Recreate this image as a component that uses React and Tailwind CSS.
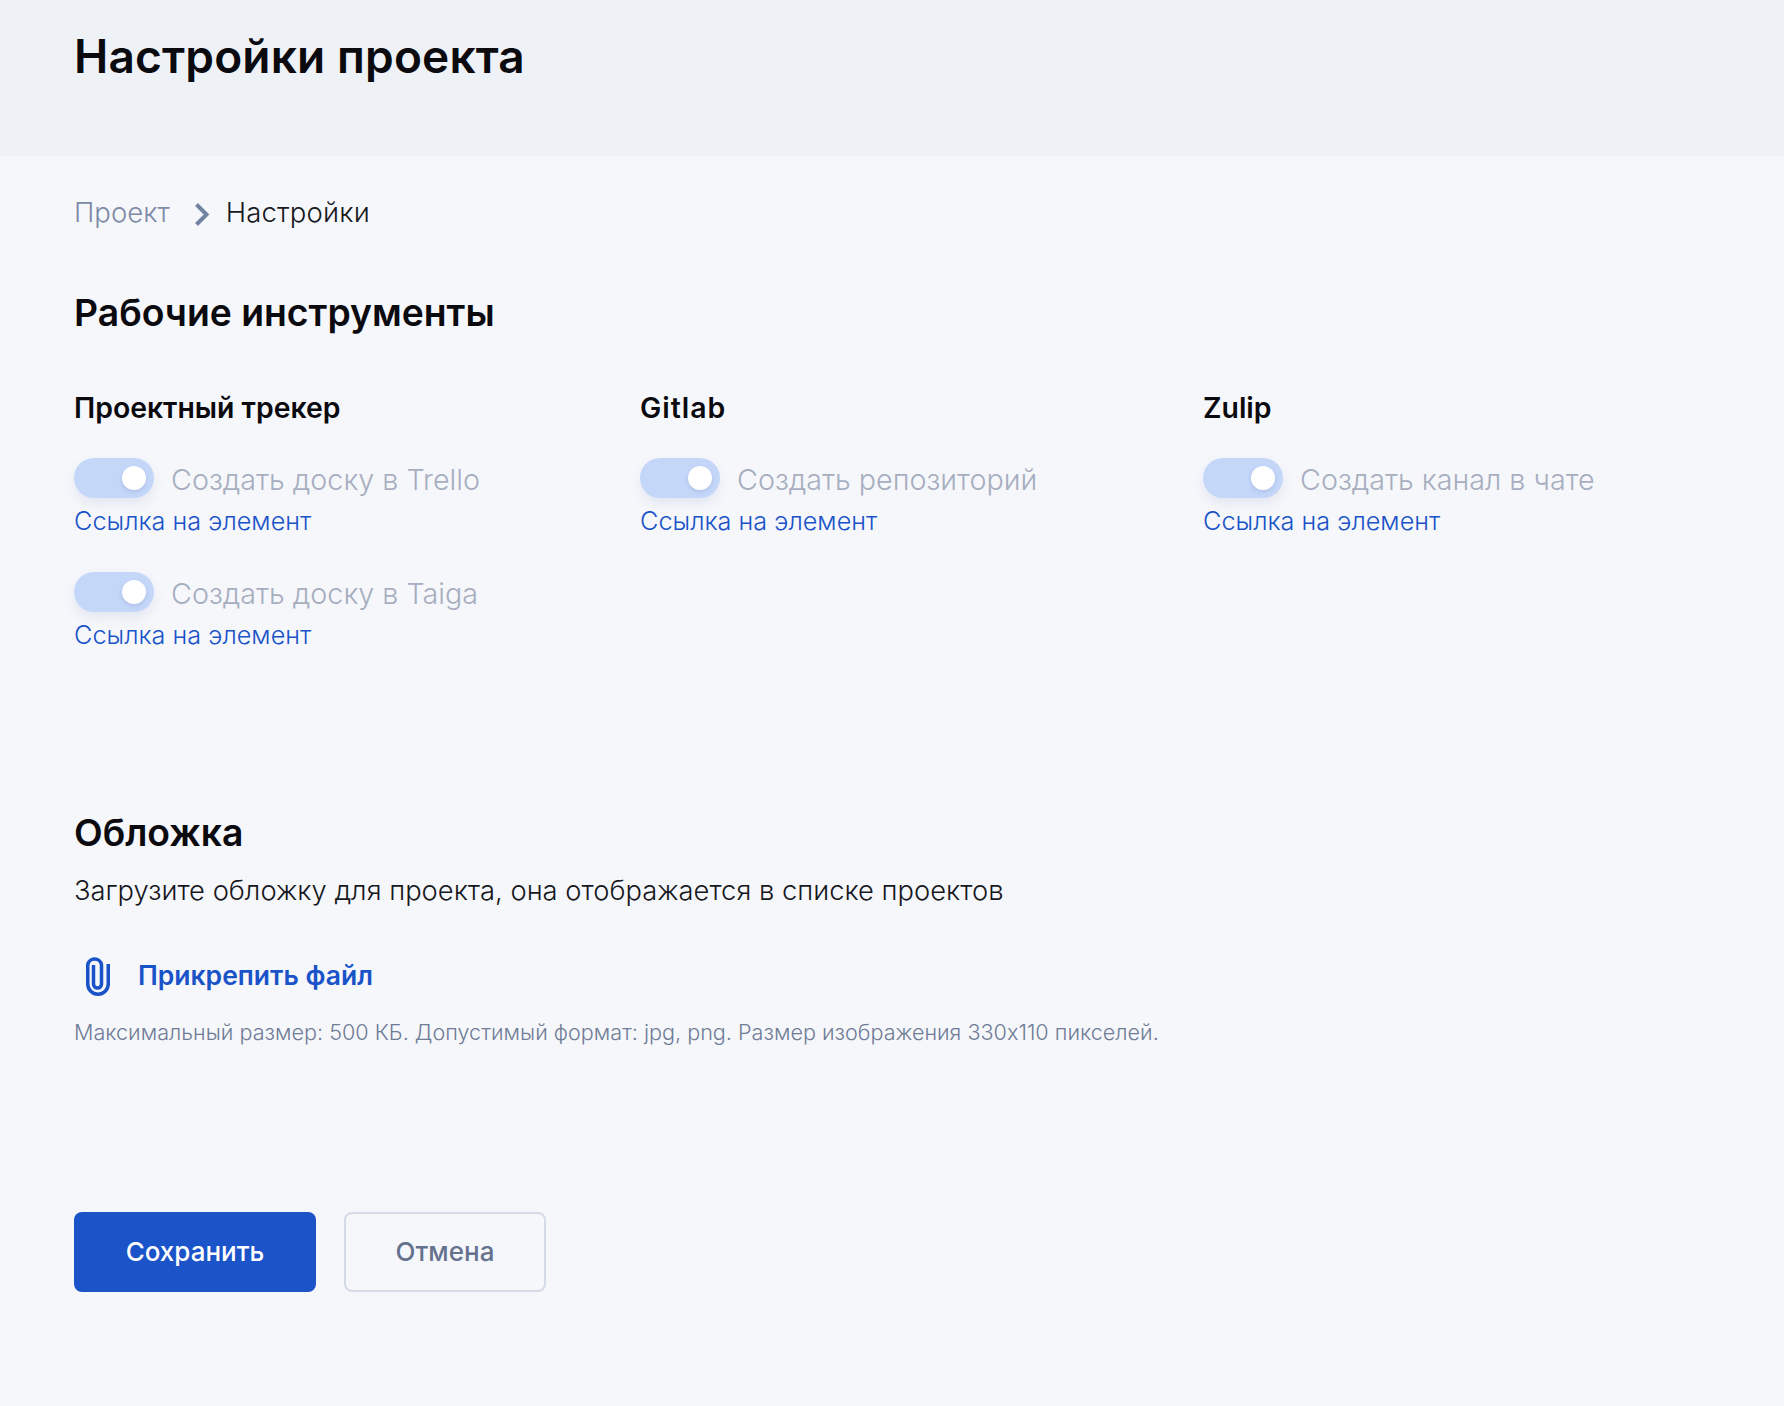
import React from 'react';

function Toggle() {
  return (
    <span className="relative block w-[80px] h-[40px] shrink-0 rounded-[20px] bg-[#c4d7f9] shadow-[0_6px_12px_rgba(100,120,170,0.12)]">
      <span className="absolute left-[48px] top-[8px] w-[24px] h-[24px] rounded-full bg-white shadow-[0_2px_4px_rgba(90,110,160,0.2)]" />
    </span>
  );
}

function ToolOption({ label }) {
  return (
    <div>
      <div className="flex items-center gap-[17px] h-[40px]">
        <Toggle />
        <span className="mt-[4px] text-[28.7px] leading-[40px] text-[#a6aebf] font-light whitespace-nowrap">{label}</span>
      </div>
      <a className="block mt-[3px] text-[25.25px] leading-[40px] font-light text-[#1a53c8] whitespace-nowrap">Ссылка на элемент</a>
    </div>
  );
}

function ToolColumn({ title, options, className, titleClass = '' }) {
  return (
    <div className={className}>
      <h3 className={`text-[28.4px] leading-[40px] font-[560] text-[#0a0a0f] whitespace-nowrap ${titleClass}`}>{title}</h3>
      <div className="mt-[30px] flex flex-col gap-[31px]">
        {options.map((o) => (
          <ToolOption key={o} label={o} />
        ))}
      </div>
    </div>
  );
}

export default function App() {
  return (
    <div className="min-h-[1406px] bg-[#f6f7fb] font-['Inter',sans-serif]">
      <header className="h-[156px] bg-[#eef1f6] pl-[74px] pt-[24px]">
        <h1 className="text-[46px] leading-[64px] font-[560] tracking-[0.15px] text-[#0a0a0f] whitespace-nowrap">Настройки проекта</h1>
      </header>

      <main className="pl-[74px]">
        <nav className="mt-[37px] flex items-center h-[40px] text-[27.5px] font-light">
          <span className="text-[#7d8aa6]">Проект</span>
          <svg className="ml-[25px] mr-[16px] mt-[3px]" width="15" height="23" viewBox="0 0 15 23" fill="none">
            <path d="M1.5 1.5 L11.5 11.5 L1.5 21.5" stroke="#7383a3" strokeWidth="4" />
          </svg>
          <span className="text-[#16181d] tracking-[0.2px]">Настройки</span>
        </nav>

        <h2 className="mt-[55px] text-[37.3px] leading-[50px] font-[560] text-[#0a0a0f]">Рабочие инструменты</h2>

        <div className="mt-[50px] flex">
          <ToolColumn className="w-[566px]" title="Проектный трекер" options={['Создать доску в Trello', 'Создать доску в Taiga']} />
          <ToolColumn className="w-[563px]" titleClass="tracking-[1px]" title="Gitlab" options={['Создать репозиторий']} />
          <ToolColumn title="Zulip" options={['Создать канал в чате']} />
        </div>

        <h2 className="mt-[153px] text-[37.3px] leading-[50px] font-[560] text-[#0a0a0f]">Обложка</h2>
        <p className="mt-[13px] text-[27.35px] leading-[40px] font-[350] text-[#16181d] whitespace-nowrap">Загрузите обложку для проекта, она отображается в списке проектов</p>

        <a className="mt-[45px] flex items-center h-[40px] text-[26.5px] font-[560] text-[#1a53c8]">
          <svg className="ml-[12px] mr-[28px]" width="24" height="40" viewBox="0 0 24 40" fill="none">
            <path d="M7.5 9 V28 C7.5 30.5 9.3 32 11.5 32 C13.8 32 15.5 30.5 15.5 28 V8.75 A7 7 0 0 0 1.75 8.75 V28 A10.25 10.25 0 0 0 22.25 28 V8" stroke="#1a53c8" strokeWidth="3.5" />
          </svg>
          Прикрепить файл
        </a>

        <p className="mt-[20px] text-[21.6px] leading-[32px] font-[350] text-[#6f7c96] whitespace-nowrap">Максимальный размер: 500 КБ. Допустимый формат: jpg, png. Размер изображения 330x110 пикселей.</p>

        <div className="mt-[164px] flex gap-[28px]">
          <button className="w-[242px] h-[80px] pb-[2px] rounded-[8px] bg-[#1b53c8] text-white text-[26px] font-medium">Сохранить</button>
          <button className="w-[202px] h-[80px] pb-[2px] rounded-[8px] border-2 border-[#d5dae8] text-[#65728e] text-[26px] font-medium">Отмена</button>
        </div>
      </main>
    </div>
  );
}
